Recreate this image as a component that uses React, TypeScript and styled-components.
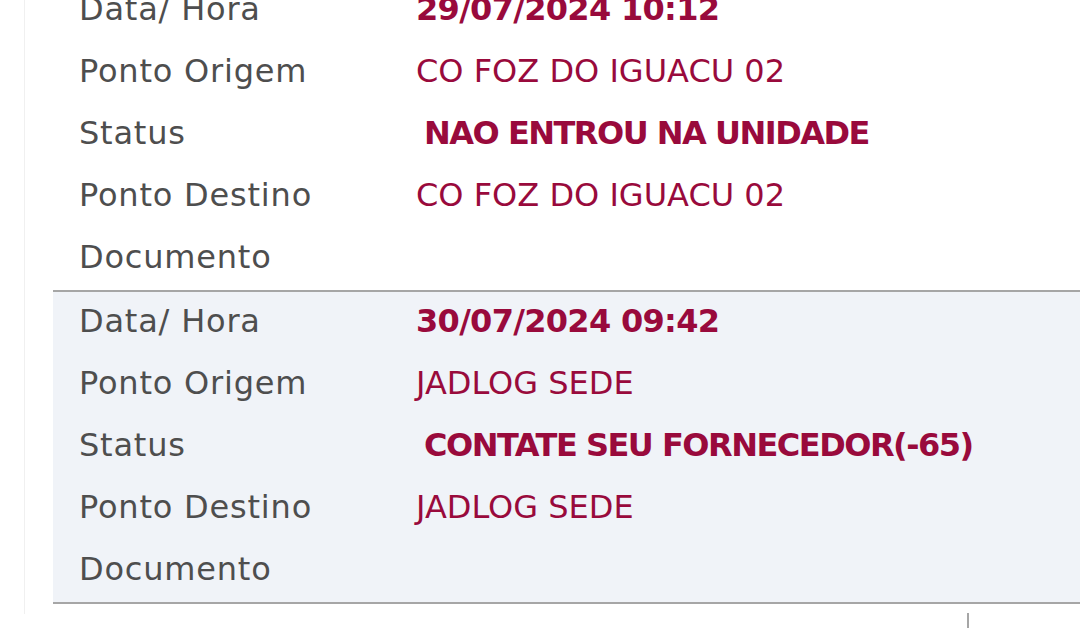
import React from 'react';
import styled, { createGlobalStyle } from 'styled-components';

const GlobalStyle = createGlobalStyle`
  html, body {
    margin: 0;
    padding: 0;
    background: #fff;
    overflow: hidden;
  }
  body {
    font-family: "DejaVu Sans", "Liberation Sans", sans-serif;
  }
`;

const Page = styled.div`
  width: 1080px;
  height: 628px;
  overflow: hidden;
  position: relative;
`;

const Panel = styled.div`
  margin-left: 24px;
  margin-top: -20px;
  padding: 0 0 10px 28px;
  border-left: 1px solid #f0f0f0;
`;

const Block = styled.section<{ $shaded?: boolean }>`
  background: ${p => (p.$shaded ? '#f0f3f8' : '#fff')};
  border-bottom: 2px solid #a6a6a6;
`;

const Row = styled.div`
  display: grid;
  grid-template-columns: 337px 1fr;
  align-items: center;
  height: 62px;
  box-sizing: border-box;
  padding: 0 0 4px 26px;
`;

const Label = styled.span`
  font-size: 32px;
  line-height: 1;
  letter-spacing: 0.8px;
  color: #4e4e4e;
  white-space: nowrap;
`;

const Value = styled.span<{ $bold?: boolean; $status?: boolean }>`
  font-size: 32px;
  line-height: 1;
  color: #990a3c;
  font-weight: ${p => (p.$bold ? 700 : 400)};
  letter-spacing: ${p => (p.$status ? '-1.5px' : p.$bold ? '-0.7px' : '0')};
  padding-left: ${p => (p.$status ? '8px' : '0')};
  white-space: nowrap;
`;

const Tick = styled.div`
  position: absolute;
  left: 967px;
  top: 613px;
  width: 2px;
  height: 15px;
  background: #a6a6a6;
`;

type Entry = { date: string; origin: string; status: string; dest: string };

const entries: Entry[] = [
  { date: '29/07/2024 10:12', origin: 'CO FOZ DO IGUACU 02', status: 'NAO ENTROU NA UNIDADE', dest: 'CO FOZ DO IGUACU 02' },
  { date: '30/07/2024 09:42', origin: 'JADLOG SEDE', status: 'CONTATE SEU FORNECEDOR(-65)', dest: 'JADLOG SEDE' },
];

const App: React.FC = () => (
  <Page>
    <GlobalStyle />
    <Panel>
      {entries.map((e, i) => (
        <Block key={i} $shaded={i % 2 === 1}>
          <Row><Label>Data/ Hora</Label><Value $bold>{e.date}</Value></Row>
          <Row><Label>Ponto Origem</Label><Value>{e.origin}</Value></Row>
          <Row><Label>Status</Label><Value $bold $status>{e.status}</Value></Row>
          <Row><Label>Ponto Destino</Label><Value>{e.dest}</Value></Row>
          <Row><Label>Documento</Label><Value /></Row>
        </Block>
      ))}
    </Panel>
    <Tick />
  </Page>
);

export default App;
